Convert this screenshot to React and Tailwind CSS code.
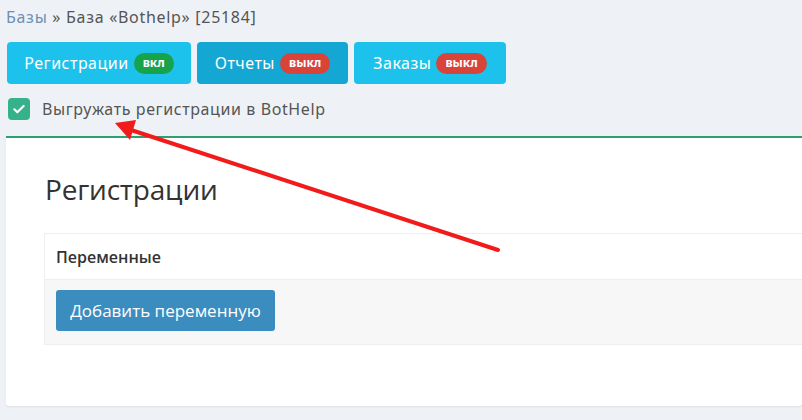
import React from 'react';

const tabs = [
  { label: 'Регистрации', badge: 'вкл', on: true, active: false, w: 'w-[184px]' },
  { label: 'Отчеты', badge: 'выкл', on: false, active: true, w: 'w-[151px]' },
  { label: 'Заказы', badge: 'выкл', on: false, active: false, w: 'w-[152px]' },
];

const App = () => {
  return (
    <div className="relative w-[802px] h-[420px] overflow-hidden bg-[#eef2f6] font-['Noto_Sans',sans-serif]">
      {/* Breadcrumb */}
      <div className="pl-[6px] pt-[5px] h-[42px] text-[16px] tracking-[0.7px] text-[#555]">
        <span className="text-[#6d90b3]">Базы</span> » База «Bothelp» [25184]
      </div>

      {/* Tabs */}
      <div className="flex gap-[6px] pl-[7px]">
        {tabs.map((t) => (
          <div
            key={t.label}
            className={`${t.w} h-[42px] rounded-[4px] flex items-center justify-center gap-[5px] text-[16px] tracking-[0.5px] text-white ${t.active ? 'bg-[#15a7d4]' : 'bg-[#1cc2eb]'}`}
          >
            <span>{t.label}</span>
            <span className={`h-[21px] px-[9px] rounded-full flex items-center text-[12px] font-bold tracking-normal ${t.on ? 'bg-[#17a24c]' : 'bg-[#d8433a]'}`}>
              {t.badge}
            </span>
          </div>
        ))}
      </div>

      {/* Checkbox */}
      <div className="flex items-center gap-[12px] pl-[8px] mt-[14px] h-[22px]">
        <div className="w-[22px] h-[22px] rounded-[4px] bg-[#35b28a] flex items-center justify-center">
          <svg width="16" height="16" viewBox="0 0 24 24" fill="none" stroke="white" strokeWidth="3.2" strokeLinecap="round" strokeLinejoin="round">
            <path d="M5 12.5l4.5 4.5L19 7.5" />
          </svg>
        </div>
        <span className="text-[16px] tracking-[0.6px] text-[#555]">Выгружать регистрации в BotHelp</span>
      </div>

      {/* Card */}
      <div className="ml-[6px] mt-[16px] h-[270px] bg-white border-t-2 border-[#2f9f70] rounded-b-[3px] shadow-[0_1px_2px_rgba(0,0,0,0.08)] pl-[38px] font-['Open_Sans',sans-serif]">
        <h2 className="pl-[1px] pt-[30px] h-[95px] text-[28px] text-[#333] font-normal tracking-[-0.2px]">Регистрации</h2>
        <div className="border border-[#eeeeee] border-r-0">
          <div className="h-[46px] flex items-center pl-[11px] text-[16px] font-semibold text-[#333] bg-white border-b border-[#eeeeee]">
            Переменные
          </div>
          <div className="h-[64px] bg-[#f7f7f7] pl-[11px] pt-[10px]">
            <button className="w-[219px] h-[41px] rounded-[3px] bg-[#3b8dc0] text-white text-[17px]">
              Добавить переменную
            </button>
          </div>
        </div>
      </div>

      {/* Red arrow annotation */}
      <svg className="absolute inset-0 pointer-events-none" width="802" height="420">
        <line x1="498" y1="250" x2="128" y2="129" stroke="#f21b1b" strokeWidth="4" strokeLinecap="round" />
        <polygon points="115,123 136,120 130,140" fill="#f21b1b" />
      </svg>
    </div>
  );
};

export default App;
